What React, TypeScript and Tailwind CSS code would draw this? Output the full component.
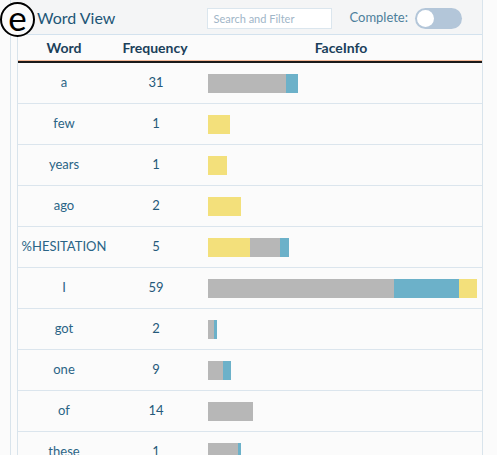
import React from 'react';

type Seg = { w: number; c: string };

const GRAY = '#b7b7b7';
const BLUE = '#6cb1c9';
const YELLOW = '#f3e07b';

const rows: { word: string; freq: number; segs: Seg[] }[] = [
  { word: 'a', freq: 31, segs: [{ w: 78, c: GRAY }, { w: 12, c: BLUE }] },
  { word: 'few', freq: 1, segs: [{ w: 22, c: YELLOW }] },
  { word: 'years', freq: 1, segs: [{ w: 19, c: YELLOW }] },
  { word: 'ago', freq: 2, segs: [{ w: 33, c: YELLOW }] },
  { word: '%HESITATION', freq: 5, segs: [{ w: 42, c: YELLOW }, { w: 30, c: GRAY }, { w: 9, c: BLUE }] },
  { word: 'I', freq: 59, segs: [{ w: 186, c: GRAY }, { w: 65, c: BLUE }, { w: 18, c: YELLOW }] },
  { word: 'got', freq: 2, segs: [{ w: 6, c: GRAY }, { w: 3, c: BLUE }] },
  { word: 'one', freq: 9, segs: [{ w: 15, c: GRAY }, { w: 8, c: BLUE }] },
  { word: 'of', freq: 14, segs: [{ w: 45, c: GRAY }] },
  { word: 'these', freq: 1, segs: [{ w: 30, c: GRAY }, { w: 3, c: BLUE }] },
];

export default function App() {
  return (
    <div className="relative w-[497px] h-[455px] overflow-hidden bg-[#fbfbfb] font-['Lato','Noto_Sans',sans-serif]">
      {/* panel label */}
      <div className="absolute left-0 top-[2px] z-10 h-[35px] w-[35px] rounded-full bg-[#fbfbfb] text-center text-[35px] leading-[30px] text-black">
        <div className="absolute inset-0 rounded-full border-2 border-black" />
        e
      </div>

      <div className="ml-[10px] w-[473px] h-full border-l border-r border-[#d9e4ec]">
        {/* header bar */}
        <div className="flex h-[35px] items-center border-b border-[#d3e2ee] bg-[#f4f5f6] pl-[26px] pr-[20px] pt-[2px]">
          <span className="text-[16px] text-[#1d5676]">Word View</span>
          <input
            placeholder="Search and Filter"
            className="ml-auto h-[21px] w-[125px] border border-[#dbe6ee] bg-white px-[5px] text-[11px] text-[#5a7d94] placeholder:text-[#9fb6c8] outline-none"
          />
          <span className="ml-[17px] text-[13px] text-[#4d7f9b]">Complete:</span>
          <div className="ml-[7px] flex h-[21px] w-[47px] items-center rounded-full bg-[#b3c6d9] pl-[2px]">
            <div className="h-[17px] w-[17px] rounded-full bg-white" />
          </div>
        </div>

        {/* table */}
        <div className="ml-[6px] border-l border-[#d9e4ec]">
          <div className="flex h-[25px] items-center text-[14px] font-bold text-[#1a405a]">
            <div className="w-[92px] text-center">Word</div>
            <div className="w-[90px] text-center">Frequency</div>
            <div className="flex-1 text-center">FaceInfo</div>
          </div>
          <div className="border-t border-[#f3b898]" />
          <div className="border-t-2 border-[#1a1a1a]" />
          {rows.map((r) => (
            <div key={r.word} className="flex h-[41px] items-center border-b border-[#dbe5ed] text-[13px] text-[#2a6486]">
              <div className="w-[92px] text-center">{r.word}</div>
              <div className="w-[90px] pl-[2px] text-center text-[#25597a]">{r.freq}</div>
              <div className="flex flex-1 pl-[8px]">
                {r.segs.map((s, i) => (
                  <div key={i} className="h-[19px]" style={{ width: s.w, backgroundColor: s.c }} />
                ))}
              </div>
            </div>
          ))}
        </div>
      </div>
    </div>
  );
}
